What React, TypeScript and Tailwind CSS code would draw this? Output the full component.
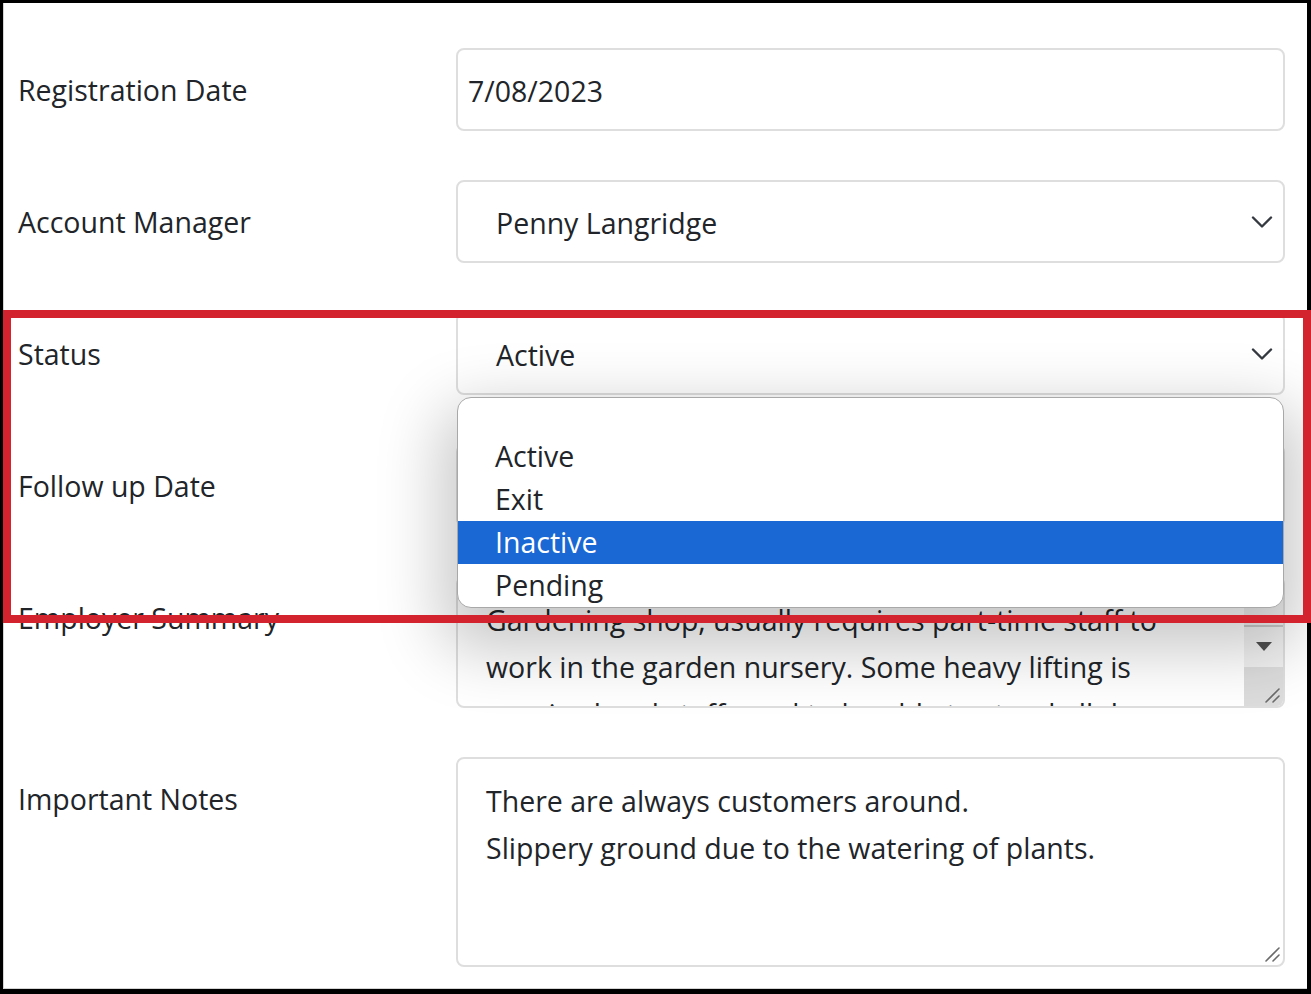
import React from 'react';

const font = { fontFamily: '"Open Sans", "Noto Sans", sans-serif' };

const Chevron: React.FC = () => (
  <svg width="22" height="14" viewBox="0 0 22 14" fill="none" className="shrink-0">
    <path d="M2 2.5l9 9 9-9" stroke="#343a40" strokeWidth="2.4" strokeLinecap="round" strokeLinejoin="round" />
  </svg>
);

const Grip: React.FC = () => (
  <svg width="18" height="18" viewBox="0 0 18 18" className="absolute bottom-[2px] right-[2px]">
    <path d="M16 3L3 16M16 10L10 16" stroke="#6b6b6b" strokeWidth="1.6" strokeLinecap="round" />
  </svg>
);

const Label: React.FC<{ text: string }> = ({ text }) => (
  <div className="w-[438px] shrink-0 pt-[19px] text-[28.5px] leading-[47px] text-[#212529]">{text}</div>
);

const statusOptions = ['Active', 'Exit', 'Inactive', 'Pending'];

export default function App() {
  return (
    <div className="relative h-[994px] w-[1311px] bg-black pt-[3px] pl-[3px] pr-[4px] pb-[5px]" style={font}>
      <div className="flex h-full w-full flex-col gap-[49px] border-l border-b border-[#d4d4d4] bg-white pt-[45px] pl-[14px] pr-[22px]">
        <div className="flex">
          <Label text="Registration Date" />
          <div className="flex h-[83px] flex-1 items-center rounded-[8px] border-2 border-[#dedede] px-[10px] pt-[3px] text-[28.5px] text-[#212529]">
            7/08/2023
          </div>
        </div>

        <div className="flex">
          <Label text="Account Manager" />
          <div className="flex h-[83px] flex-1 items-center justify-between rounded-[8px] border-2 border-[#dedede] pl-[38px] pr-[10px] text-[28.5px] text-[#212529]">
            <span className="pt-[3px]">Penny Langridge</span>
            <Chevron />
          </div>
        </div>

        <div className="relative z-10 flex">
          <Label text="Status" />
          <div className="relative flex-1">
            <div className="flex h-[83px] items-center justify-between rounded-[8px] border-2 border-[#dedede] pl-[38px] pr-[10px] text-[28.5px] text-[#212529]">
              <span className="pt-[3px]">Active</span>
              <Chevron />
            </div>
            <div className="absolute left-[1px] top-[85px] w-[827px] overflow-hidden rounded-[14px] border border-[#a8a8a8] bg-white pt-[37px] shadow-[0_26px_64px_16px_rgba(0,0,0,0.22)]">
              {statusOptions.map((o) => (
                <div
                  key={o}
                  className={
                    o === 'Inactive'
                      ? 'h-[43px] bg-[#1a68d4] pl-[37px] text-[28.5px] leading-[43px] text-white'
                      : 'h-[43px] pl-[37px] text-[28.5px] leading-[43px] text-[#212529]'
                  }
                >
                  {o}
                </div>
              ))}
            </div>
          </div>
        </div>

        <div className="flex">
          <Label text="Follow up Date" />
          <div className="h-[83px] flex-1 rounded-[8px] border-2 border-[#dedede]" />
        </div>

        <div className="flex">
          <Label text="Employer Summary" />
          <div className="relative flex h-[132px] flex-1 overflow-hidden rounded-[8px] border-2 border-[#dedede]">
            <div className="flex-1 pl-[28px] pt-[19px] text-[28.5px] leading-[47px] text-[#212529]">
              <div>Gardening shop, usually requires part-time staff to</div>
              <div>work in the garden nursery. Some heavy lifting is</div>
              <div>required and staff need to be able to stand all day.</div>
            </div>
            <div className="flex w-[39px] flex-col bg-[#f1f1f1]">
              <div className="h-[47px] bg-[#f1f1f1]" />
              <div className="flex-1 bg-[#c9c9c9]" />
              <div className="flex h-[40px] items-center justify-center bg-[#f1f1f1]">
                <svg width="16" height="10" viewBox="0 0 16 10">
                  <path d="M0 0h16L8 9z" fill="#505050" />
                </svg>
              </div>
              <div className="h-[39px] bg-[#dcdcdc]" />
            </div>
            <Grip />
          </div>
        </div>

        <div className="flex">
          <Label text="Important Notes" />
          <div className="relative h-[210px] flex-1 rounded-[8px] border-2 border-[#dedede] pl-[28px] pt-[19px] text-[28.5px] leading-[47px] text-[#212529]">
            <div>There are always customers around.</div>
            <div>Slippery ground due to the watering of plants.</div>
            <Grip />
          </div>
        </div>
      </div>

      <div className="pointer-events-none absolute left-[3px] top-[310px] z-20 h-[313px] w-[1308px] border-[8px] border-[#d2232f]" />
    </div>
  );
}
